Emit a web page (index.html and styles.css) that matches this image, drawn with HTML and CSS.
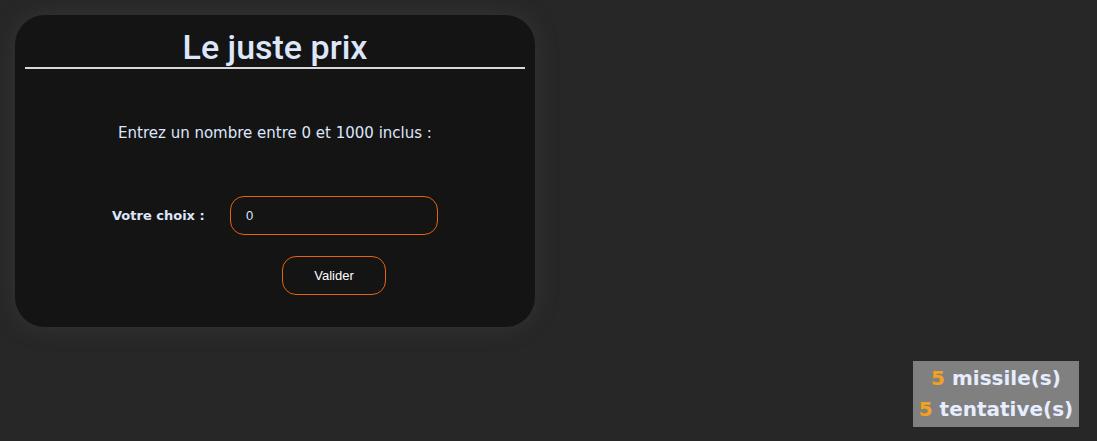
FILE: index.html
```html
<!DOCTYPE html>
<html lang="fr">
<head>
<meta charset="utf-8">
<title>Le juste prix</title>
<link rel="stylesheet" href="styles.css">
</head>
<body>
<main class="card">
  <h1 class="title">Le juste prix</h1>
  <hr class="rule">
  <p class="prompt">Entrez un nombre entre 0 et 1000 inclus :</p>
  <form class="form">
    <div class="row">
      <label class="label" for="choix">Votre choix :</label>
      <input class="input" id="choix" type="text" value="0">
    </div>
    <button class="btn" type="button">Valider</button>
  </form>
</main>
<aside class="stats">
  <div><span class="num">5</span> missile(s)</div>
  <div><span class="num">5</span> tentative(s)</div>
</aside>
</body>
</html>
```

FILE: styles.css
```css
html, body {
  margin: 0;
  height: 100%;
}
body {
  background: #272727;
  font-family: "DejaVu Sans", Roboto, sans-serif;
  color: #dde6fb;
  position: relative;
  overflow: hidden;
}
.card {
  margin: 15px;
  width: 520px;
  height: 312px;
  box-sizing: border-box;
  padding: 0 10px;
  background: #141414;
  border-radius: 30px;
  box-shadow: 0 0 22px rgba(70, 70, 70, 0.45);
  display: flex;
  flex-direction: column;
}
.title {
  margin: 13px 0 0;
  text-align: center;
  font-family: Roboto, "DejaVu Sans", sans-serif;
  font-size: 34px;
  font-weight: 500;
  line-height: 38px;
  letter-spacing: 0;
}
.rule {
  margin: 1px 0 0;
  border: 0;
  height: 2px;
  background: #d8d8d8;
}
.prompt {
  margin: 54px 0 0;
  text-align: center;
  font-size: 15px;
  line-height: 20px;
}
.form {
  display: flex;
  flex-direction: column;
  align-items: flex-start;
  margin-top: 53px;
}
.row {
  display: flex;
  align-items: center;
  margin-left: 87px;
}
.label {
  font-weight: 700;
  font-size: 13px;
  width: 118px;
}
.input {
  width: 208px;
  height: 39px;
  box-sizing: border-box;
  border: 1px solid #e8620f;
  border-radius: 14px;
  background: #141414;
  color: #dde6fb;
  font-family: "Liberation Sans", Arial, sans-serif;
  font-size: 13px;
  padding: 0 15px;
  outline: none;
}
.btn {
  margin-top: 21px;
  margin-left: 257px;
  width: 104px;
  height: 39px;
  border: 1px solid #e8620f;
  border-radius: 14px;
  background: #141414;
  color: #ffffff;
  font-family: "Liberation Sans", Arial, sans-serif;
  font-size: 13px;
}
.stats {
  position: absolute;
  right: 18px;
  bottom: 14px;
  width: 166px;
  height: 66px;
  box-sizing: border-box;
  background: #808080;
  color: #e6edff;
  font-weight: 700;
  font-size: 20px;
  line-height: 31px;
  padding-top: 2px;
  text-align: center;
}
.num {
  color: #f5a01e;
}
```
